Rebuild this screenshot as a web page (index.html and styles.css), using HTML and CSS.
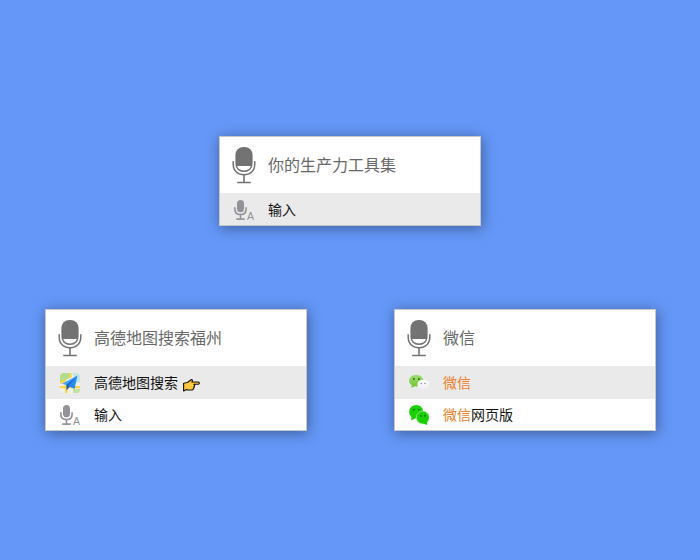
FILE: index.html
```
<!DOCTYPE html>
<html lang="zh-CN">
<head>
<meta charset="utf-8">
<title>Launcher</title>
<link rel="stylesheet" href="styles.css">
</head>
<body>
<svg class="defs" aria-hidden="true">
  <symbol id="mic" viewBox="0 0 24 37">
    <rect x="3.4" y="0" width="17.2" height="25" rx="8" fill="#737373"/>
    <path d="M5.2 19H18.8Q17.6 23.4 12 23.4T5.2 19Z" fill="#fff"/>
    <path d="M1.2 14.3V17C1.2 24 6 27.8 12 27.8S22.8 24 22.8 17V14.3" fill="none" stroke="#737373" stroke-width="1.5"/>
    <path d="M12 28V35.5M5.2 35.5H18.8" fill="none" stroke="#737373" stroke-width="1.6"/>
  </symbol>
  <symbol id="voice" viewBox="0 0 20 20">
    <rect x="3" y="0" width="7" height="12.2" rx="3.5" fill="#929298"/>
    <path d="M.9 7.2V9.2C.9 12.8 3.2 14.6 6.5 14.6S12.1 12.8 12.1 9.2V7.2M6.5 14.4V19" fill="none" stroke="#929298" stroke-width="1.6"/>
    <path d="M2.2 19.1H10.8" fill="none" stroke="#929298" stroke-width="1.7"/>
    <text class="letter" x="12.9" y="20">A</text>
  </symbol>
</svg>
<main class="stage">
  <section class="panel">
    <header class="query"><svg class="mic"><use href="#mic"/></svg><span>你的生产力工具集</span></header>
    <div class="row selected"><svg class="icon voice"><use href="#voice"/></svg><span>输入</span></div>
  </section>
  <div class="pair">
    <section class="panel">
      <header class="query"><svg class="mic"><use href="#mic"/></svg><span>高德地图搜索福州</span></header>
      <div class="row selected">
        <svg class="icon" viewBox="0 0 20 20">
          <rect width="20" height="20" rx="4" fill="#f0f0f0"/>
          <path d="M3.5 0H10L10.5 4 3 9H0V4Q0 0 3.5 0Z" fill="#b3de8c"/>
          <path d="M12 0H16Q20 0 20 4V9L17 10Z" fill="#bde6ec"/>
          <path d="M13 16H20Q20 20 17 20H13Z" fill="#bfe39a"/>
          <path d="M10.5 0V5M0 10 6 7M0 14.2H20M6.3 12V20M15 14H20" stroke="#ffd23f" stroke-width="2.2" fill="none"/>
          <path d="M17.5 2.6 1.8 10.8 7 12.3Z" fill="#42a3ff"/>
          <path d="M17.5 2.6 6.3 12 6.6 17.2 10 13.5Z" fill="#1762bd"/>
          <path d="M17.5 2.6 8.2 13 14.5 16Z" fill="#278bf7"/>
        </svg>
        <span>高德地图搜索</span>
        <svg class="hand" viewBox="0 0 17 13">
          <path d="M.6 4.3 4.5 3.5 8 .7Q10.4.5 8.8 3H15.1Q16.6 3.2 16.2 4.6 16 5.2 14.8 5.2L10.9 5.3Q12.2 6.3 11.1 7.3 11.7 8.5 10.4 9.2 10.5 10.5 9.3 11H5L3.5 10.6.6 12Z" fill="#ffc83d" stroke="#17130c" stroke-width="1.15" stroke-linejoin="round"/>
        </svg>
      </div>
      <div class="row"><svg class="icon"><use href="#voice"/></svg><span>输入</span></div>
    </section>
    <section class="panel">
      <header class="query"><svg class="mic"><use href="#mic"/></svg><span>微信</span></header>
      <div class="row selected">
        <svg class="icon" viewBox="0 0 20 20">
          <defs>
            <linearGradient id="leaf" x2="0" y2="1"><stop stop-color="#a2df70"/><stop offset="1" stop-color="#70c63b"/></linearGradient>
            <linearGradient id="cloud" x2="0" y2="1"><stop stop-color="#fff"/><stop offset="1" stop-color="#eceef0"/></linearGradient>
          </defs>
          <ellipse cx="7.2" cy="7.7" rx="7.2" ry="5.9" fill="url(#leaf)"/>
          <path d="M3 12 2.2 15 6 13Z" fill="#70c63b"/>
          <ellipse cx="14.2" cy="11.5" rx="5.8" ry="4.8" fill="url(#cloud)"/>
          <path d="M15 15.5 18 17 17.7 14.5Z" fill="#eceef0"/>
          <g fill="#335925"><circle cx="4.9" cy="6" r=".9"/><circle cx="9.9" cy="6" r=".9"/></g>
          <g fill="#7d8185"><circle cx="12.2" cy="10.6" r=".75"/><circle cx="16" cy="10.6" r=".75"/></g>
        </svg>
        <span class="match">微信</span>
      </div>
      <div class="row">
        <svg class="icon" viewBox="0 0 20 20">
          <ellipse cx="7.2" cy="6.8" rx="7.2" ry="6.8" fill="#1bd000"/>
          <path d="M2.6 11.5 2 15.4 7 13Z" fill="#1bd000"/>
          <ellipse cx="13.8" cy="12.5" rx="6.5" ry="6.4" fill="#1bd000" stroke="#c8f3c2" stroke-width=".6"/>
          <path d="M14 18.6 18.2 20 18 16Z" fill="#1bd000"/>
          <g fill="#075c00"><circle cx="4.8" cy="4.7" r=".9"/><circle cx="9.7" cy="4.7" r=".9"/><circle cx="11.8" cy="10.9" r=".8"/><circle cx="16" cy="10.9" r=".8"/></g>
        </svg>
        <span><span class="match">微信</span>网页版</span>
      </div>
    </section>
  </div>
</main>
</body>
</html>
```
FILE: styles.css
```
* { box-sizing: border-box; }
body {
  margin: 0;
  background: #6497f7;
  font-family: "Noto Sans CJK SC", sans-serif;
}
.defs { display: none; }
.stage {
  height: 560px;
  padding-top: 136px;
  display: flex;
  flex-direction: column;
  align-items: center;
  gap: 83px;
}
.pair { display: flex; gap: 87px; margin-left: 1px; }
.panel {
  width: 262px;
  background: #fff;
  border: 1px solid #c5c7ca;
  box-shadow: 1px 2px 13px rgba(0, 0, 0, .38);
}
.query {
  height: 56px;
  padding-left: 12px;
  display: flex;
  align-items: center;
  gap: 12px;
  color: #686868;
  font-size: 16px;
  line-height: 24px;
}
.query span { padding-bottom: 2px; }
.mic { width: 24px; height: 37px; flex: none; }
.row {
  height: 31px;
  padding-left: 14px;
  display: flex;
  align-items: center;
  gap: 14px;
  color: #111;
  font-size: 14px;
  line-height: 20px;
}
.row > span { padding-bottom: 1px; }
.row.selected { height: 33px; background: #eaeaea; }
.row.selected:last-child { height: 32px; }
.row.selected:last-child > span { padding-bottom: 0; }
.icon { width: 20px; height: 20px; flex: none; }
.selected .voice { margin-top: 2px; }
.hand { width: 17px; height: 13px; margin: 5px 0 0 -9px; }
.match { color: #f0802a; }
.letter {
  font: 10.5px "Liberation Sans", sans-serif;
  fill: #929298;
}
```
